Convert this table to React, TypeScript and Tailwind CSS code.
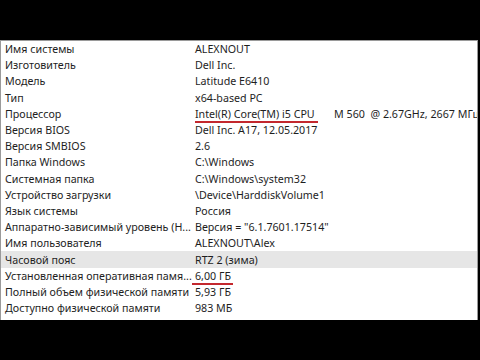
const rows: [string, string][] = [
  ["Имя системы", "ALEXNOUT"],
  ["Изготовитель", "Dell Inc."],
  ["Модель", "Latitude E6410"],
  ["Тип", "x64-based PC"],
  ["Процессор", "cpu"],
  ["Версия BIOS", "Dell Inc. A17, 12.05.2017"],
  ["Версия SMBIOS", "2.6"],
  ["Папка Windows", "C:\\Windows"],
  ["Системная папка", "C:\\Windows\\system32"],
  ["Устройство загрузки", "\\Device\\HarddiskVolume1"],
  ["Язык системы", "Россия"],
  ["Аппаратно-зависимый уровень (Н...", "Версия = \"6.1.7601.17514\""],
  ["Имя пользователя", "ALEXNOUT\\Alex"],
  ["Часовой пояс", "RTZ 2 (зима)"],
  ["Установленная оперативная памя...", "ram"],
  ["Полный объем физической памяти", "5,93 ГБ"],
  ["Доступно физической памяти", "983 МБ"],
  ["Всего виртуальной памяти", "11,9 ГБ"],
];

function Value({ v }: { v: string }) {
  if (v === "cpu") {
    return (
      <span className="whitespace-pre">
        <span className="relative">
          Intel(R) Core(TM) i5 CPU
          <span className="absolute left-0 right-[-3px] top-[14px] h-[2px] bg-[#c3282e]" />
        </span>
        {"       M 560  @ 2.67GHz, 2667 МГц, ядер: 2"}
      </span>
    );
  }
  if (v === "ram") {
    return (
      <span className="relative">
        6,00 ГБ
        <span className="absolute left-[-3px] right-[-2px] top-[14px] h-[2px] bg-[#c3282e]" />
      </span>
    );
  }
  return <span>{v}</span>;
}

export default function App() {
  return (
    <div className="flex h-[360px] w-[480px] flex-col overflow-hidden bg-black font-['Noto_Sans',sans-serif] text-[10.7px] text-[#1e1e1e]">
      <div className="h-[40px] shrink-0" />
      <div className="mr-[2px] h-[280px] shrink-0 overflow-hidden border-l border-r border-t border-[#9a9a9a] bg-white">
        {rows.map(([k, v]) => (
          <div
            key={k}
            className={`flex h-[16.2px] items-center whitespace-nowrap ${k === "Часовой пояс" ? "bg-[#e6e6e6]" : ""}`}
          >
            <div className="w-[194px] shrink-0 overflow-hidden pl-[4px] pr-[4px]">{k}</div>
            <div className="min-w-0">
              <Value v={v} />
            </div>
          </div>
        ))}
      </div>
      <div className="flex-1" />
    </div>
  );
}
